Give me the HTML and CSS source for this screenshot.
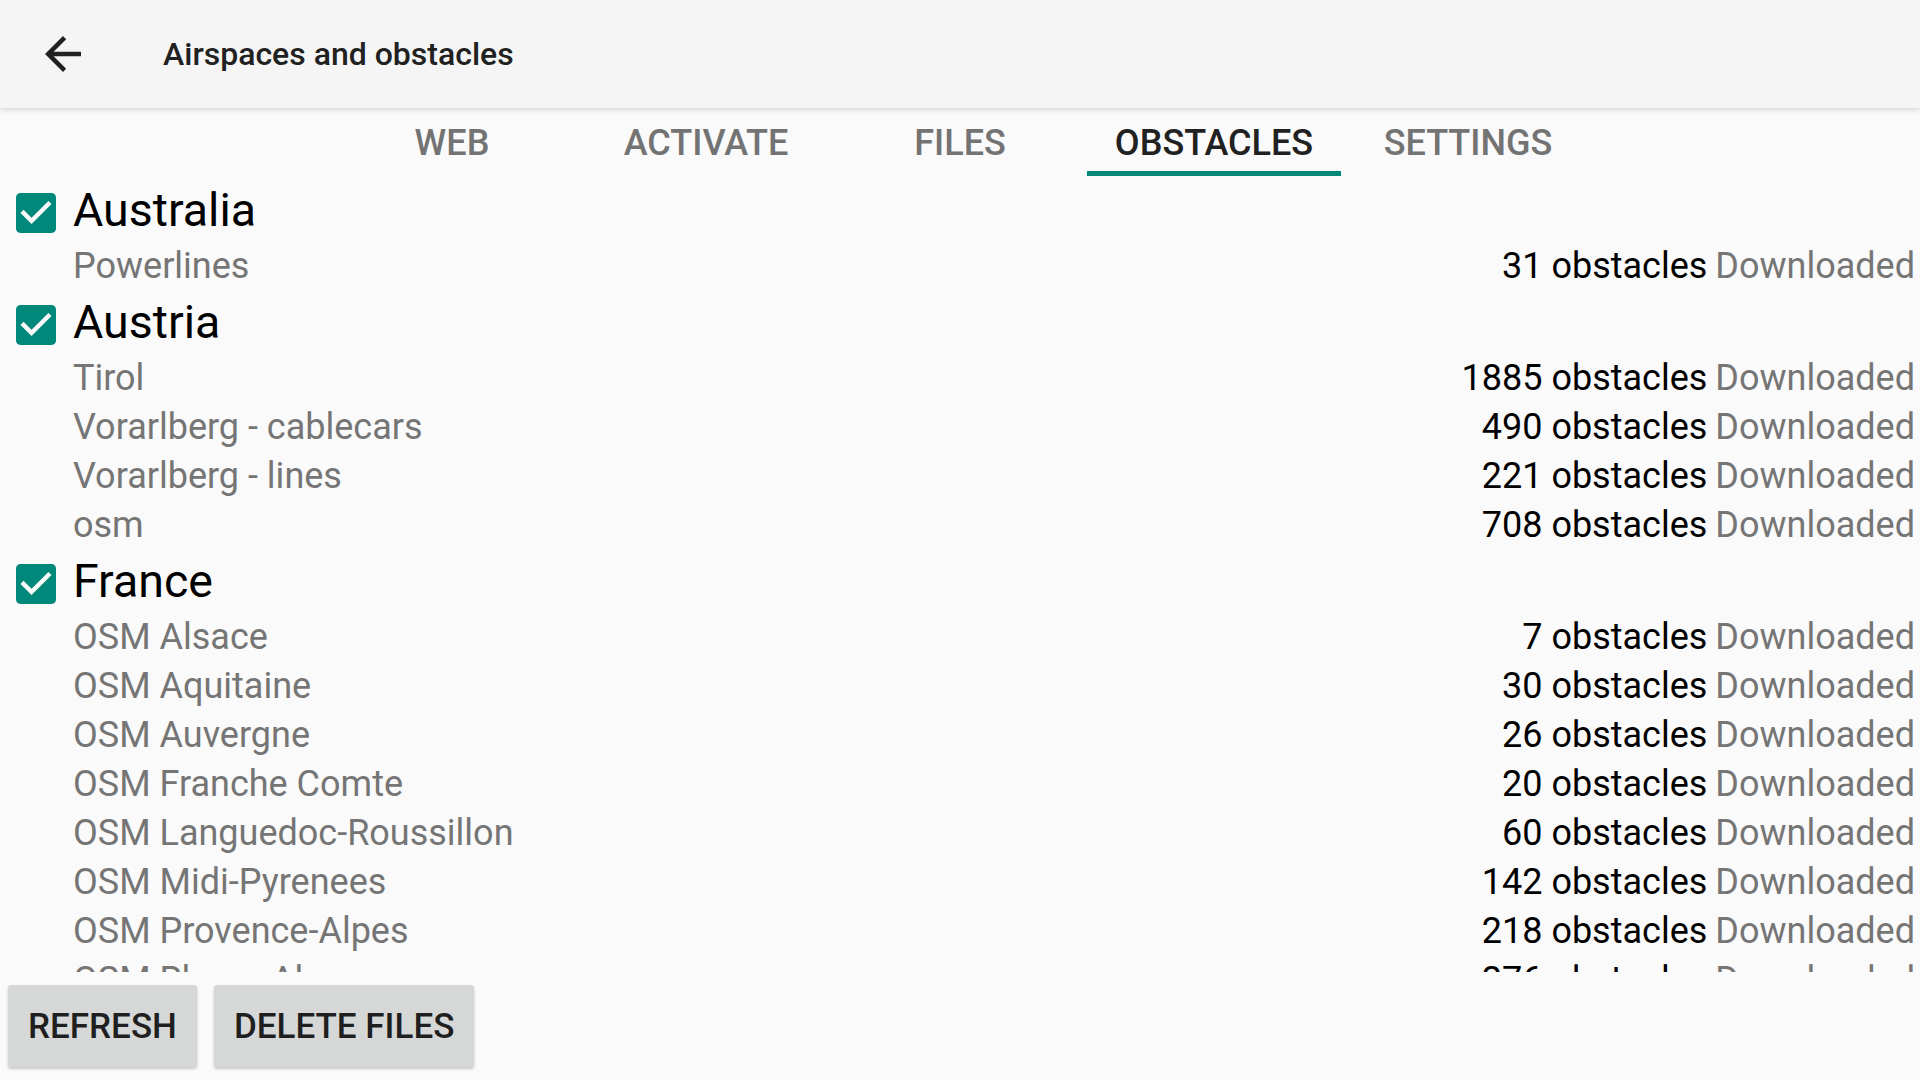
FILE: index.html
```html
<!DOCTYPE html>
<html lang="en">
<head>
  <meta charset="UTF-8" />
  <title>Airspaces and obstacles</title>
  <link rel="stylesheet" href="styles.css">
</head>
<body>
  <!-- Toolbar -->
  <header class="toolbar">
    <svg class="back-icon" viewBox="4 4 16 16" width="36" height="36">
      <path d="M20 11H7.83l5.59-5.59L12 4l-8 8 8 8 1.41-1.41L7.83 13H20v-2z" fill="#212121"/>
    </svg>
    <h1 class="title">Airspaces and obstacles</h1>
  </header>

  <!-- Tabs -->
  <nav class="tabs">
    <div class="tab">WEB</div>
    <div class="tab">ACTIVATE</div>
    <div class="tab">FILES</div>
    <div class="tab active">OBSTACLES</div>
    <div class="tab">SETTINGS</div>
  </nav>

  <!-- Obstacle list -->
  <main class="list">
    <div class="country">
      <svg class="check" viewBox="3 3 18 18" width="40" height="40"><path d="M19 3H5c-1.11 0-2 .9-2 2v14c0 1.1.89 2 2 2h14c1.11 0 2-.9 2-2V5c0-1.1-.89-2-2-2zm-9 14l-5-5 1.41-1.41L10 14.170l7.59-7.59L19 8l-9 9z"/></svg>
      <span>Australia</span>
    </div>
    <div class="row"><span class="name">Powerlines</span><span class="count">31 obstacles</span><span class="status">Downloaded</span></div>

    <div class="country">
      <svg class="check" viewBox="3 3 18 18" width="40" height="40"><path d="M19 3H5c-1.11 0-2 .9-2 2v14c0 1.1.89 2 2 2h14c1.11 0 2-.9 2-2V5c0-1.1-.89-2-2-2zm-9 14l-5-5 1.41-1.41L10 14.17l7.59-7.59L19 8l-9 9z"/></svg>
      <span>Austria</span>
    </div>
    <div class="row"><span class="name">Tirol</span><span class="count">1885 obstacles</span><span class="status">Downloaded</span></div>
    <div class="row"><span class="name">Vorarlberg - cablecars</span><span class="count">490 obstacles</span><span class="status">Downloaded</span></div>
    <div class="row"><span class="name">Vorarlberg - lines</span><span class="count">221 obstacles</span><span class="status">Downloaded</span></div>
    <div class="row"><span class="name">osm</span><span class="count">708 obstacles</span><span class="status">Downloaded</span></div>

    <div class="country">
      <svg class="check" viewBox="3 3 18 18" width="40" height="40"><path d="M19 3H5c-1.11 0-2 .9-2 2v14c0 1.1.89 2 2 2h14c1.11 0 2-.9 2-2V5c0-1.1-.89-2-2-2zm-9 14l-5-5 1.41-1.41L10 14.17l7.59-7.59L19 8l-9 9z"/></svg>
      <span>France</span>
    </div>
    <div class="row"><span class="name">OSM Alsace</span><span class="count">7 obstacles</span><span class="status">Downloaded</span></div>
    <div class="row"><span class="name">OSM Aquitaine</span><span class="count">30 obstacles</span><span class="status">Downloaded</span></div>
    <div class="row"><span class="name">OSM Auvergne</span><span class="count">26 obstacles</span><span class="status">Downloaded</span></div>
    <div class="row"><span class="name">OSM Franche Comte</span><span class="count">20 obstacles</span><span class="status">Downloaded</span></div>
    <div class="row"><span class="name">OSM Languedoc-Roussillon</span><span class="count">60 obstacles</span><span class="status">Downloaded</span></div>
    <div class="row"><span class="name">OSM Midi-Pyrenees</span><span class="count">142 obstacles</span><span class="status">Downloaded</span></div>
    <div class="row"><span class="name">OSM Provence-Alpes</span><span class="count">218 obstacles</span><span class="status">Downloaded</span></div>
    <div class="row"><span class="name">OSM Rhone-Alpes</span><span class="count">276 obstacles</span><span class="status">Downloaded</span></div>
  </main>

  <!-- Bottom buttons -->
  <footer class="actions">
    <button class="btn">REFRESH</button>
    <button class="btn">DELETE FILES</button>
  </footer>
</body>
</html>
```

FILE: styles.css
```css
/* Page */
html, body {
  margin: 0;
  padding: 0;
  height: 100%;
}

body {
  display: flex;
  flex-direction: column;
  height: 1080px;
  overflow: hidden;
  background: #fafafa;
  font-family: Roboto, "Noto Sans", sans-serif;
  color: #000;
}

/* Toolbar */
.toolbar {
  flex: 0 0 108px;
  display: flex;
  align-items: center;
  padding-left: 45px;
  background: #f5f5f5;
  box-shadow: 0 2px 5px rgba(0, 0, 0, 0.14);
  position: relative;
  z-index: 2;
}

.back-icon {
  flex: none;
}

.title {
  margin: 0 0 0 82px;
  font-size: 32px;
  font-weight: 500;
  color: #212121;
}

/* Tabs */
.tabs {
  flex: 0 0 68px;
  display: flex;
  justify-content: center;
}

.tab {
  width: 254px;
  display: flex;
  align-items: center;
  justify-content: center;
  padding-top: 7px;
  box-sizing: border-box;
  font-size: 36px;
  font-weight: 500;
  color: #737373;
  border-bottom: 5px solid transparent;
}

.tab.active {
  color: #212121;
  border-bottom-color: #00897b;
}

/* List */
.list {
  flex: 1;
  overflow: hidden;
  padding-top: 3px;
}

.country {
  height: 63px;
  display: flex;
  align-items: center;
  padding-left: 16px;
  font-size: 46.5px;
  line-height: 63px;
}

.check {
  flex: none;
  margin: 5px 17px 0 0;
  fill: #00897b;
}

.row {
  height: 49px;
  display: flex;
  align-items: center;
  padding: 0 5px 0 73px;
  font-size: 36px;
  line-height: 49px;
}

.name {
  flex: 1;
  color: #757575;
}

.count {
  color: #000;
}

.status {
  margin-left: 8px;
  color: #757575;
}

/* Bottom buttons */
.actions {
  flex: 0 0 108px;
  display: flex;
  align-items: flex-start;
  gap: 17px;
  padding: 13px 8px 0;
  box-sizing: border-box;
}

.btn {
  height: 82px;
  padding: 0 20px;
  border: none;
  border-radius: 3px;
  background: #d6d7d7;
  box-shadow: 0 2px 3px rgba(0, 0, 0, 0.2);
  font-family: Roboto, "Noto Sans", sans-serif;
  font-size: 35px;
  font-weight: 500;
  color: #1f1f1f;
}
```
